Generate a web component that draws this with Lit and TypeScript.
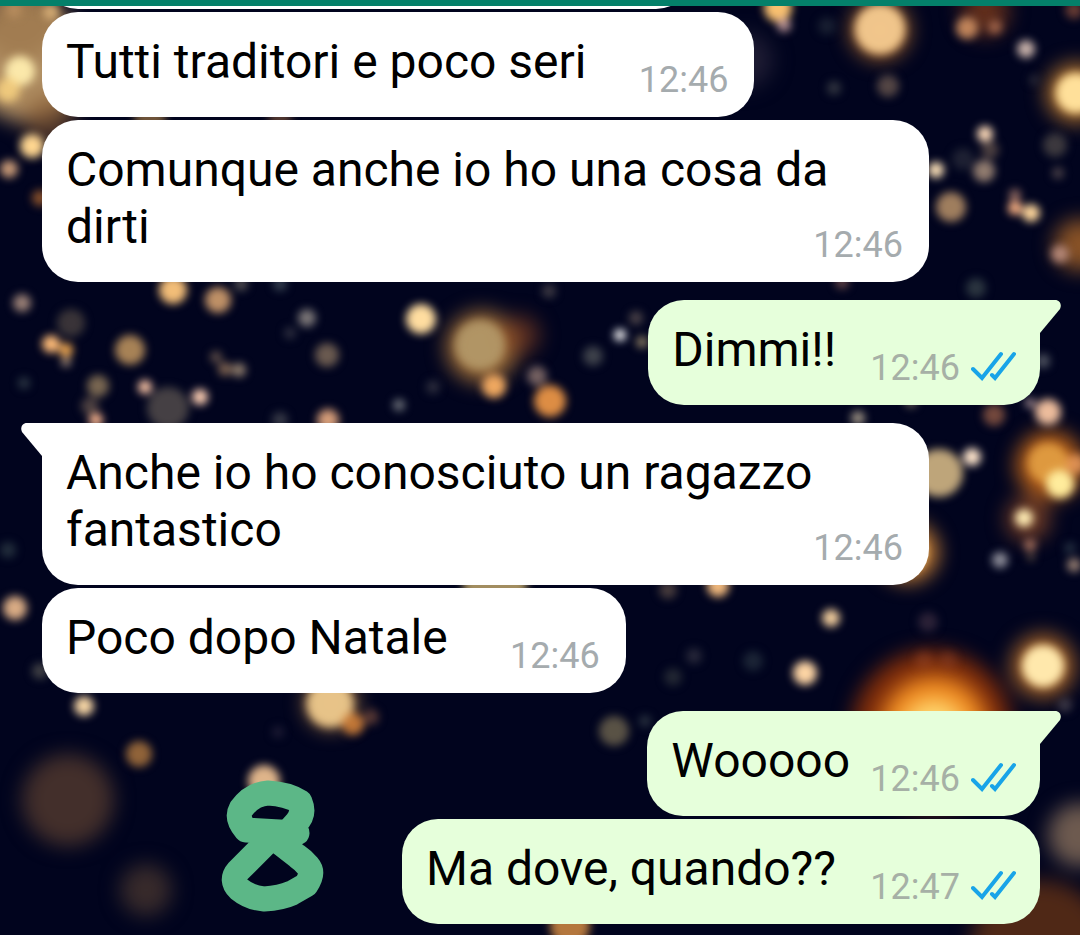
import { LitElement, html, css, svg } from "lit";
import { customElement, property } from "lit/decorators.js";
import { classMap } from "lit/directives/class-map.js";

type Gap = "tight" | "normal" | "wide" | "widest";

interface Message {
  text: string;
  time: string;
  sent?: boolean;
  tail?: boolean;
  gap: Gap;
}

const MESSAGES: Message[] = [
  { text: "Tutti traditori e poco seri", time: "12:46", gap: "wide" },
  { text: "Comunque anche io ho una cosa da dirti", time: "12:46", gap: "tight" },
  { text: "Dimmi!!", time: "12:46", sent: true, tail: true, gap: "normal" },
  { text: "Anche io ho conosciuto un ragazzo fantastico", time: "12:46", tail: true, gap: "tight" },
  { text: "Poco dopo Natale", time: "12:46", gap: "widest" },
  { text: "Wooooo", time: "12:46", sent: true, tail: true, gap: "tight" },
  { text: "Ma dove, quando??", time: "12:47", sent: true, gap: "normal" },
];

// Lights of the wallpaper: x, y, radius, colour, opacity.
type Light = [number, number, number, string, number];

const GLOWS: Light[] = [
  [28, 62, 60, "#b89565", 0.95],
  [20, 20, 40, "#a07a50", 0.9],
  [50, 120, 26, "#80552e", 0.6],
  [482, 347, 36, "#a8743a", 0.9],
  [520, 335, 20, "#8a4522", 0.6],
  [932, 730, 80, "#8a3008", 0.9],
  [934, 730, 54, "#f08a20", 1],
  [934, 732, 32, "#ffd870", 1],
  [1043, 666, 32, "#b06a2a", 0.9],
  [880, 30, 30, "#a5662e", 0.9],
  [1076, 93, 30, "#b87830", 0.9],
  [1050, 465, 34, "#c0661a", 0.95],
  [1028, 519, 22, "#8a4a28", 0.8],
  [68, 800, 46, "#4a342c", 0.9],
  [146, 890, 26, "#3d2f2c", 0.9],
  [908, 552, 30, "#d88a38", 0.95],
  [331, 703, 26, "#c08a4a", 0.8],
  [1080, 835, 32, "#806a58", 0.85],
  [1040, 950, 70, "#6a3414", 0.75],
  [1080, 245, 26, "#a06028", 0.85],
  [985, 12, 24, "#7a3a1c", 0.8],
  [745, 60, 28, "#262238", 0.8],
];

const LIGHTS: Light[] = [
  [20, 71, 15, "#ffedae", 0.95],
  [8, 90, 12, "#f5cf80", 0.9],
  [51, 12, 8, "#e8be80", 0.8],
  [14, 10, 8, "#c89a68", 0.6],
  [32, 146, 12, "#ffd690", 1],
  [9, 169, 9, "#dca880", 0.9],
  [40, 198, 8, "#c07030", 0.7],
  [22, 303, 9, "#ab8e80", 0.9],
  [173, 290, 14, "#f2bd78", 1],
  [218, 300, 13, "#c8986a", 0.95],
  [241, 284, 7, "#66625e", 0.8],
  [280, 284, 7, "#44505c", 0.8],
  [71, 323, 14, "#47403f", 0.8],
  [51, 344, 9, "#ffbc78", 1],
  [66, 350, 7, "#f0a850", 1],
  [66, 362, 5, "#c0a58c", 0.8],
  [130, 350, 15, "#b0895a", 0.95],
  [98, 386, 11, "#857157", 0.9],
  [145, 387, 7, "#ffc8a8", 1],
  [168, 408, 21, "#4c4748", 0.9],
  [90, 406, 9, "#60504a", 0.8],
  [96, 420, 7, "#ffb890", 1],
  [200, 397, 8, "#ffd0b4", 1],
  [216, 357, 6, "#776052", 0.8],
  [225, 369, 7, "#8a6c54", 0.9],
  [239, 370, 7, "#a08c76", 0.9],
  [307, 318, 9, "#898482", 0.9],
  [290, 333, 6, "#3a3948", 0.8],
  [327, 355, 12, "#766455", 0.9],
  [328, 420, 11, "#d49c78", 1],
  [280, 420, 8, "#444650", 0.8],
  [24, 383, 6, "#36424c", 0.8],
  [421, 319, 15, "#ffdda0", 1],
  [480, 345, 25, "#b8a070", 0.8],
  [494, 386, 12, "#efa860", 1],
  [537, 376, 10, "#826b68", 0.9],
  [550, 401, 16, "#dd8d44", 1],
  [399, 405, 6, "#8c9094", 0.8],
  [433, 387, 7, "#363644", 0.8],
  [620, 335, 6, "#ffffff", 1],
  [593, 356, 10, "#4e5156", 0.8],
  [549, 291, 7, "#4c474c", 0.8],
  [636, 318, 7, "#5e5252", 0.8],
  [642, 342, 6, "#c8b080", 0.7],
  [778, 8, 14, "#f8c070", 1],
  [784, 25, 7, "#c8a0a0", 0.9],
  [880, 29, 25, "#f5cb90", 0.95],
  [888, 86, 11, "#5d4e49", 0.9],
  [834, 88, 7, "#3d4148", 0.8],
  [827, 26, 9, "#1e2536", 0.8],
  [967, 28, 11, "#d09060", 0.9],
  [995, 27, 7, "#ab6b4e", 0.9],
  [1026, 49, 9, "#c8b2aa", 1],
  [1074, 10, 9, "#804838", 0.8],
  [1076, 93, 20, "#ffe09a", 1],
  [1034, 80, 5, "#333540", 0.8],
  [985, 134, 8, "#ffdcba", 1],
  [990, 150, 9, "#5e4e48", 0.8],
  [984, 171, 11, "#a08878", 0.9],
  [963, 159, 11, "#262838", 0.8],
  [1055, 145, 12, "#4b4646", 0.8],
  [1058, 173, 6, "#5c5052", 0.8],
  [936, 170, 8, "#ffe4ba", 1],
  [951, 207, 15, "#a88562", 0.95],
  [1015, 195, 6, "#a07468", 0.9],
  [1015, 208, 7, "#ffb484", 1],
  [1031, 213, 9, "#ffd79c", 1],
  [1060, 254, 9, "#c09080", 0.9],
  [976, 288, 10, "#303b44", 0.9],
  [842, 282, 7, "#7a5450", 0.8],
  [1043, 361, 7, "#636870", 0.8],
  [994, 415, 11, "#805040", 0.9],
  [1048, 412, 13, "#ecbc9c", 1],
  [1030, 403, 5, "#d0b0b0", 0.8],
  [858, 418, 7, "#b0a490", 0.9],
  [911, 402, 6, "#90806c", 0.7],
  [939, 473, 24, "#c8ae80", 0.95],
  [972, 457, 9, "#ffe6cc", 1],
  [1048, 463, 20, "#e8a848", 0.8],
  [1060, 484, 14, "#ffec9c", 1],
  [1076, 464, 10, "#f0a060", 0.8],
  [1024, 518, 9, "#ffecb4", 1],
  [1030, 545, 6, "#b87c64", 0.9],
  [1031, 557, 4, "#806850", 0.7],
  [1000, 560, 8, "#9c9ca6", 0.9],
  [1074, 565, 7, "#a88e7c", 0.9],
  [1070, 548, 6, "#2c3848", 0.8],
  [906, 552, 20, "#ffd080", 0.9],
  [928, 622, 10, "#30253a", 0.9],
  [1043, 666, 21, "#ffe8ac", 1],
  [924, 660, 9, "#a04c28", 0.4],
  [948, 660, 9, "#904428", 0.4],
  [1065, 705, 7, "#484450", 0.8],
  [15, 608, 12, "#d8ab84", 1],
  [40, 671, 8, "#50504f", 0.8],
  [8, 550, 8, "#2a3844", 0.8],
  [84, 706, 10, "#f4d4a4", 1],
  [139, 754, 13, "#a06e3c", 0.9],
  [330, 704, 23, "#ecc88c", 0.95],
  [353, 724, 11, "#d08038", 0.9],
  [371, 717, 8, "#6a4438", 0.8],
  [278, 732, 6, "#24203a", 0.8],
  [264, 781, 16, "#deb48a", 1],
  [495, 586, 32, "#cbb070", 0.8],
  [668, 590, 9, "#584844", 0.8],
  [718, 586, 11, "#f0b87c", 1],
  [831, 618, 9, "#f0cc9c", 1],
  [694, 656, 8, "#303040", 0.8],
  [673, 677, 9, "#2a3038", 0.8],
  [753, 661, 10, "#1e2838", 0.9],
  [805, 673, 12, "#fcd4a4", 1],
  [614, 731, 15, "#5e5648", 0.95],
  [645, 721, 6, "#333d48", 0.8],
  [570, 926, 20, "#c88440", 0.9],
  [150, 118, 16, "#8a6840", 0.8],
  [280, 118, 12, "#704c38", 0.7],
];

const drawLight = ([x, y, r, color, opacity]: Light) =>
  svg`<circle cx=${x} cy=${y} r=${r} fill=${color} opacity=${opacity}></circle>`;

@customElement("bokeh-wallpaper")
class BokehWallpaper extends LitElement {
  static styles = css`
    :host {
      display: block;
      background: #01041e;
    }
    .lights {
      display: block;
      width: 100%;
      height: 100%;
    }
  `;

  render() {
    return html`
      <svg class="lights" viewBox="0 0 1080 935" preserveAspectRatio="xMidYMid slice" aria-hidden="true">
        <defs>
          <filter id="soft" x="-60" y="-60" width="1200" height="1060" filterUnits="userSpaceOnUse" color-interpolation-filters="sRGB">
            <feGaussianBlur stdDeviation="10"></feGaussianBlur>
          </filter>
          <filter id="fine" x="-60" y="-60" width="1200" height="1060" filterUnits="userSpaceOnUse" color-interpolation-filters="sRGB">
            <feGaussianBlur stdDeviation="4"></feGaussianBlur>
          </filter>
        </defs>
        <g filter="url(#soft)">${GLOWS.map(drawLight)}</g>
        <g filter="url(#fine)">${LIGHTS.map(drawLight)}</g>
      </svg>
    `;
  }
}

@customElement("chat-bubble")
class ChatBubble extends LitElement {
  @property({ attribute: false }) message?: Message;

  static styles = css`
    :host {
      display: block;
      max-width: 100%;
    }
    .bubble {
      position: relative;
      display: grid;
      padding: 21px 26px 16px 24px;
      border-radius: 36px;
      background: #fff;
      color: #000;
    }
    .bubble.sent {
      padding-right: 24px;
      background: #e6ffdb;
    }
    .bubble.tail {
      border-top-left-radius: 0;
    }
    .bubble.sent.tail {
      border-top-left-radius: 36px;
      border-top-right-radius: 0;
    }
    .text {
      grid-area: 1 / 1;
      margin: 0;
      padding-bottom: 11px;
      font-size: 48px;
      line-height: 57px;
    }
    .reserve {
      display: inline-block;
      height: 1px;
      width: 110px;
    }
    .reserve.wide {
      width: 142px;
    }
    .reserve.widest {
      width: 152px;
    }
    .sent .reserve {
      width: 166px;
    }
    .sent .reserve.normal {
      width: 180px;
    }
    .meta {
      grid-area: 1 / 1;
      place-self: end;
      display: flex;
      align-items: center;
      gap: 11px;
      font-size: 36px;
      line-height: 42px;
      color: #a5abae;
    }
    .sent .meta {
      color: #a6b0a6;
    }
    .ticks {
      width: 45px;
      height: 30px;
      margin-bottom: 5px;
      fill: none;
      stroke: #18a4e8;
      stroke-width: 4;
      stroke-linecap: round;
    }
    .pointer {
      position: absolute;
      top: 0;
      right: 100%;
      width: 21px;
      height: 33px;
      fill: #fff;
    }
    .sent .pointer {
      right: auto;
      left: 100%;
      fill: #e6ffdb;
      transform: scaleX(-1);
    }
  `;

  render() {
    const m = this.message;
    if (!m) return html`<div class="bubble"></div>`;
    return html`
      <div class=${classMap({ bubble: true, sent: !!m.sent, tail: !!m.tail })}>
        ${m.tail
          ? html`<svg class="pointer" viewBox="0 0 21 33" aria-hidden="true">
              <path d="M21 0H6C1 0-1 5 1 9L21 33Z"></path>
            </svg>`
          : null}
        <p class="text">${m.text}<span class="reserve ${m.gap}"></span></p>
        <div class="meta">
          <time>${m.time}</time>
          ${m.sent
            ? html`<svg class="ticks" viewBox="0 0 45 30" role="img" aria-label="Letto">
                <path d="M2 18 11 27 30 3M21 24 24 27 43 3"></path>
              </svg>`
            : null}
        </div>
      </div>
    `;
  }
}

@customElement("app-root")
class AppRoot extends LitElement {
  static styles = css`
    :host {
      display: block;
      font-family: Roboto, "Noto Sans", sans-serif;
    }
    .screen {
      position: relative;
      min-height: 100vh;
      overflow: hidden;
    }
    .wallpaper {
      position: absolute;
      inset: 0;
    }
    .bar {
      position: relative;
      height: 6px;
      background: #04806a;
    }
    .thread {
      position: relative;
      display: flex;
      flex-direction: column;
      align-items: flex-start;
      gap: 3px;
      margin: 0;
      padding: 0 40px 11px 42px;
      list-style: none;
    }
    .scrolled {
      display: flex;
      align-items: flex-end;
      height: 3px;
      width: 650px;
      overflow: hidden;
    }
    .scrolled-body {
      flex: 1;
      height: 105px;
      border-radius: 36px;
      background: #fff;
    }
    .row {
      display: flex;
      max-width: calc(100% - 111px);
    }
    .row.sent {
      align-self: flex-end;
    }
    .row.turn {
      margin-top: 15px;
    }
    .doodle {
      position: absolute;
      left: 215px;
      top: 775px;
      width: 115px;
      height: 142px;
      fill: none;
      stroke: #5cb787;
      stroke-width: 25;
      stroke-linecap: round;
      stroke-linejoin: round;
    }
  `;

  render() {
    return html`
      <main class="screen">
        <bokeh-wallpaper class="wallpaper"></bokeh-wallpaper>
        <div class="bar"></div>
        <ul class="thread">
          <li class="scrolled" aria-hidden="true"><div class="scrolled-body"></div></li>
          ${MESSAGES.map(
            (m) => html`
              <li class=${classMap({ row: true, sent: !!m.sent, turn: !!m.tail })}>
                <chat-bubble .message=${m}></chat-bubble>
              </li>
            `,
          )}
        </ul>
        <svg class="doodle" viewBox="215 775 115 142" role="img" aria-label="8">
          <path
            d="M297 833 246 830Q236 818 241 809Q252 794 268 793Q288 794 300 802Q305 814 296 823L287 833M276 833 238 871Q230 880 239 889Q250 898 264 899Q281 898 292 893L306 885Q314 873 308 866Q303 860 297 856L270 835"
          ></path>
        </svg>
      </main>
    `;
  }
}
